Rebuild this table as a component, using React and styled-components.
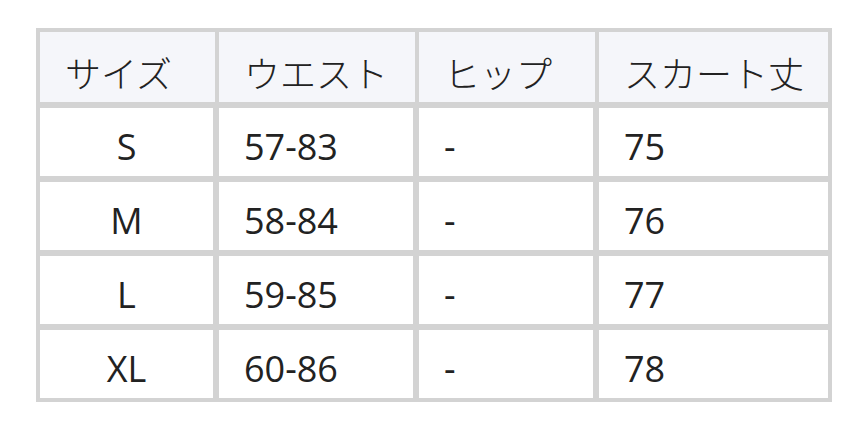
import React from "react";
import styled, { createGlobalStyle } from "styled-components";

const GlobalStyle = createGlobalStyle`
  html, body {
    margin: 0;
    padding: 0;
    background: #ffffff;
  }
  body {
    font-family: "Noto Sans CJK JP", "Noto Sans", sans-serif;
    color: #222222;
  }
`;

const HEADERS = ["サイズ", "ウエスト", "ヒップ", "スカート丈"];

const ROWS = [
  { size: "S", waist: "57-83", hip: "-", length: "75" },
  { size: "M", waist: "58-84", hip: "-", length: "76" },
  { size: "L", waist: "59-85", hip: "-", length: "77" },
  { size: "XL", waist: "60-86", hip: "-", length: "78" },
];

const Page = styled.div`
  padding: 28px 36px;
`;

const SizeTable = styled.div`
  display: grid;
  grid-template-columns: 173px 194px 174px 229px;
  grid-template-rows: 70px repeat(4, 68px);
  gap: 6px;
  padding: 4px;
  width: max-content;
  background: #d3d3d3;
`;

const HeadCell = styled.div`
  display: flex;
  align-items: center;
  padding: 9px 0 0 25px;
  margin-right: ${({ $last }) => ($last ? "0" : "-2px")};
  background: #f5f6fa;
  font-size: 36px;
  font-weight: 300;
  line-height: 1;
  white-space: nowrap;
`;

const BodyCell = styled.div`
  display: flex;
  align-items: center;
  justify-content: ${({ $center }) => ($center ? "center" : "flex-start")};
  padding: ${({ $center }) => ($center ? "9px 0 0" : "9px 0 0 25px")};
  background: #ffffff;
  font-family: "Open Sans", "Noto Sans CJK JP", sans-serif;
  font-size: 36px;
  font-weight: 400;
  line-height: 1;
`;

export default function App() {
  return (
    <Page>
      <GlobalStyle />
      <SizeTable>
        {HEADERS.map((h, i) => (
          <HeadCell key={h} $last={i === HEADERS.length - 1}>
            {h}
          </HeadCell>
        ))}
        {ROWS.map((r) => (
          <React.Fragment key={r.size}>
            <BodyCell $center>{r.size}</BodyCell>
            <BodyCell>{r.waist}</BodyCell>
            <BodyCell>{r.hip}</BodyCell>
            <BodyCell>{r.length}</BodyCell>
          </React.Fragment>
        ))}
      </SizeTable>
    </Page>
  );
}
